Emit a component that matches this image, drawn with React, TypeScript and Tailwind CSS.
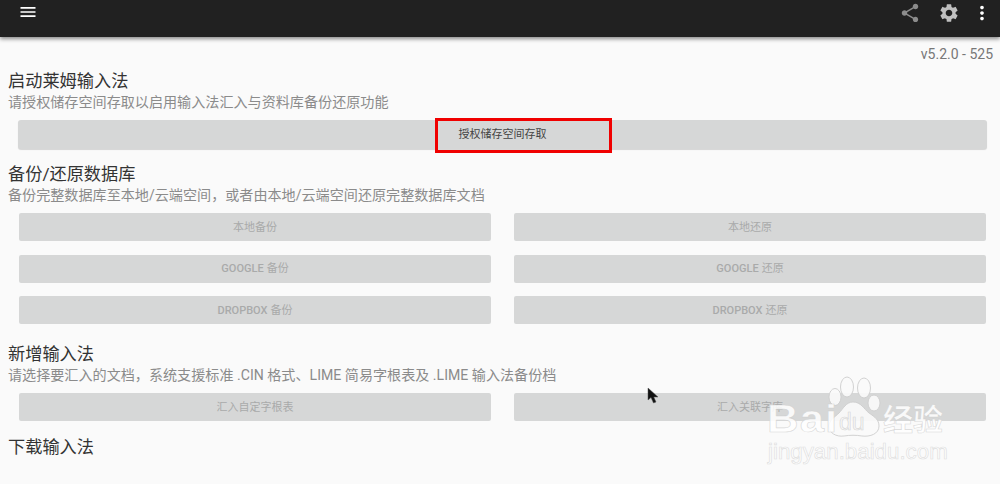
import { MdMenu, MdMoreVert, MdSettings, MdShare } from "react-icons/md";

const font = { fontFamily: '"Roboto", "Noto Sans CJK SC", sans-serif' };
const sans = { fontFamily: '"Liberation Sans", sans-serif' };

function Heading({ title, sub }: { title: string; sub?: string }) {
    return (
        <div className="pl-2">
            <h2 className="text-[17.2px] leading-[22px] text-[#333333]">{title}</h2>
            {sub && <p className="text-[14.1px] leading-[20px] text-[#8b8b8b]">{sub}</p>}
        </div>
    );
}

function Btn({ label, latin }: { label: string; latin?: string }) {
    return (
        <div className="h-[28px] pt-[2px] flex items-center justify-center bg-[#d6d7d7] rounded-[2px] text-[11px] text-[#a9aaaa]">
            {latin && <span className="font-medium mr-[3px]">{latin}</span>}
            {label}
        </div>
    );
}

function App() {
    return (
        <div className="relative w-[1000px] h-[484px] overflow-hidden bg-[#fafafa] flex flex-col" style={font}>
            <div className="h-[37px] shrink-0 bg-[#212121] shadow-[0_2px_4px_rgba(0,0,0,0.45)] flex items-start justify-between pl-[18px] pr-[7px] pt-[2px]">
                <MdMenu className="w-5 h-5 text-white" />
                <div className="flex items-center">
                    <MdShare className="w-[22px] h-[22px] text-[#8c8c8c]" />
                    <MdSettings className="w-[22px] h-[22px] ml-[17px] text-[#c0c0c0]" />
                    <MdMoreVert className="w-[22px] h-[22px] ml-[11px] text-white" />
                </div>
            </div>

            <div className="text-right pr-[7px] pt-[9px] text-[14px] leading-[16px] text-[#777777]">v5.2.0 - 525</div>

            <div className="mt-[8px]">
                <Heading title="启动莱姆输入法" sub="请授权储存空间存取以启用输入法汇入与资料库备份还原功能" />
            </div>
            <div className="mt-[8px] ml-[18px] mr-[13px] h-[29px] pt-[2px] flex items-center justify-center bg-[#d6d7d7] rounded-[3px] shadow-[0_1px_1px_rgba(0,0,0,0.15)] text-[11px] text-[#444444]">
                授权储存空间存取
            </div>

            <div className="mt-[14px]">
                <Heading title="备份/还原数据库" sub="备份完整数据库至本地/云端空间，或者由本地/云端空间还原完整数据库文档" />
            </div>
            <div className="mt-[8px] ml-[19px] grid grid-cols-[472px_472px] gap-x-[23px] gap-y-[13.5px]">
                <Btn label="本地备份" />
                <Btn label="本地还原" />
                <Btn latin="GOOGLE" label="备份" />
                <Btn latin="GOOGLE" label="还原" />
                <Btn latin="DROPBOX" label="备份" />
                <Btn latin="DROPBOX" label="还原" />
            </div>

            <div className="mt-[19px]">
                <Heading title="新增输入法" sub="请选择要汇入的文档，系统支援标准 .CIN 格式、LIME 简易字根表及 .LIME 输入法备份档" />
            </div>
            <div className="mt-[8px] ml-[19px] grid grid-cols-[472px_472px] gap-x-[23px]">
                <Btn label="汇入自定字根表" />
                <Btn label="汇入关联字库" />
            </div>

            <div className="mt-[15px]">
                <Heading title="下载输入法" />
            </div>

            {/* mouse pointer */}
            <svg className="absolute left-[647px] top-[387px]" width="14" height="18" viewBox="0 0 14 18">
                <path d="M1 1 L1 13 L4 10.5 L6.5 16 L9 15 L6.8 10 L11 10 Z" fill="#111" stroke="#555" strokeWidth="0.5" />
            </svg>

            {/* baidu watermark */}
            <div className="absolute left-[766px] top-[376px] w-[190px] h-[90px]">
                <svg className="absolute left-[62px] top-0" width="54" height="62" viewBox="0 0 54 62" fill="rgba(250,250,250,0.92)" stroke="rgba(205,205,205,0.9)" strokeWidth="1">
                    <ellipse cx="7" cy="21" rx="6" ry="8.5" />
                    <ellipse cx="19" cy="11" rx="6.5" ry="10" />
                    <ellipse cx="36" cy="12" rx="6.5" ry="10" />
                    <ellipse cx="46" cy="27" rx="6" ry="8" />
                    <path d="M25 26 C33 26 36 33 41 37 C47 41 51 44 51 50 C51 58 42 61 34 60 C28 59 22 59 16 60 C8 61 1 57 1 50 C1 44 7 41 11 37 C15 33 18 26 25 26 Z" />
                </svg>
                <div className="absolute left-[1px] top-[21px] origin-left scale-x-[1.12] text-[39px] leading-[44px] font-bold text-white/85 [-webkit-text-stroke:0.6px_rgba(200,200,200,0.7)] tracking-[1px] whitespace-nowrap" style={sans}>
                    Bai
                </div>
                <div className="absolute left-[73px] top-[33px] text-[23px] leading-[26px] text-[#f6f6f6] [-webkit-text-stroke:0.6px_rgba(205,205,205,0.8)]" style={sans}>
                    du
                </div>
                <div className="absolute left-[117px] top-[26px] text-[30px] leading-[36px] font-bold text-white/85 [-webkit-text-stroke:0.6px_rgba(200,200,200,0.7)] whitespace-nowrap">
                    经验
                </div>
                <div className="absolute left-[2px] top-[62px] text-[22.3px] leading-[28px] text-white/85 [-webkit-text-stroke:0.7px_rgba(215,215,215,0.8)] whitespace-nowrap" style={sans}>
                    jingyan.baidu.com
                </div>
            </div>

            {/* red highlight */}
            <div className="absolute left-[435px] top-[118px] w-[177px] h-[35px] border-[3px] border-[#f00000]" />
        </div>
    );
}

export default App;
